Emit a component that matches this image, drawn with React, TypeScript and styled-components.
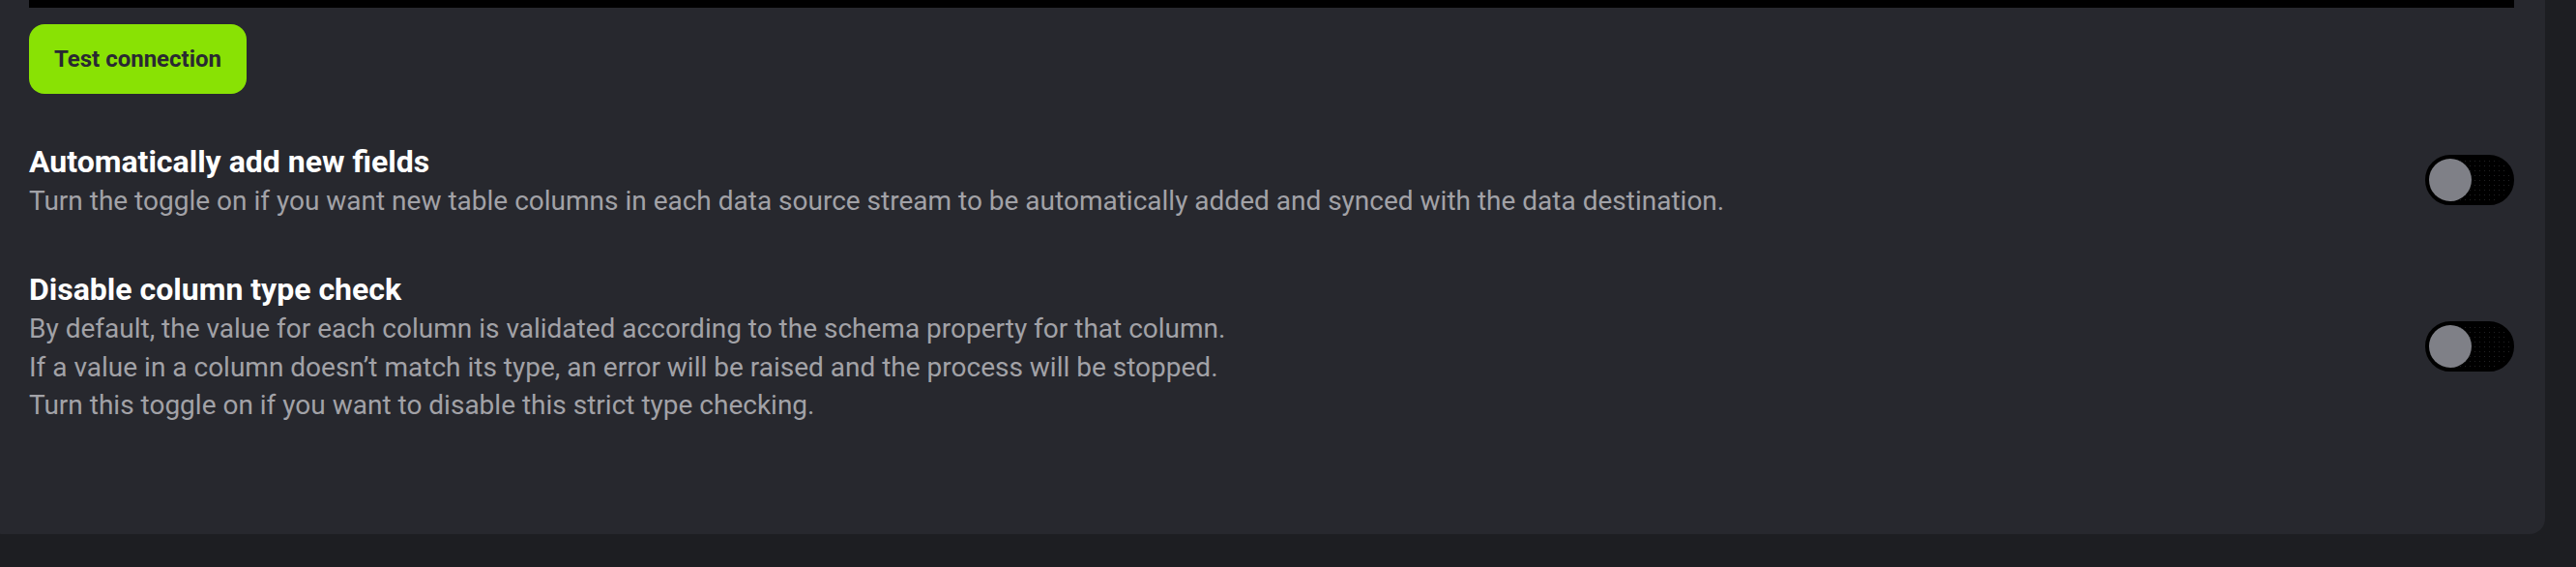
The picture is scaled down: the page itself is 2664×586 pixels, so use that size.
import React from "react";
import styled, { createGlobalStyle } from "styled-components";

const GlobalStyle = createGlobalStyle`
  html, body {
    margin: 0;
    padding: 0;
    background: #1d1e22;
    overflow: hidden;
  }
  body {
    font-family: Roboto, "Liberation Sans", Arial, sans-serif;
  }
`;

const Panel = styled.section`
  box-sizing: border-box;
  width: 2645px;
  margin-left: -13px;
  padding: 0 32px 113.5px 43px;
  background: #27282e;
  border-radius: 0 0 16px 16px;
  display: flex;
  flex-direction: column;
  align-items: flex-start;
`;

const EditorEdge = styled.div`
  align-self: stretch;
  height: 8px;
  background: #000000;
`;

const Button = styled.button`
  box-sizing: border-box;
  margin-top: 17px;
  width: 225px;
  height: 72px;
  border: none;
  border-radius: 16px;
  background: #89e204;
  color: #292932;
  font-family: Roboto, "Liberation Sans", Arial, sans-serif;
  font-weight: 700;
  font-size: 24px;
  padding: 0;
  cursor: pointer;
`;

const SettingsList = styled.div`
  align-self: stretch;
  margin-top: 48.5px;
  display: flex;
  flex-direction: column;
  gap: 51px;
`;

const SettingRow = styled.div`
  display: flex;
  align-items: center;
  justify-content: space-between;
  gap: 40px;
`;

const SettingText = styled.div`
  display: flex;
  flex-direction: column;
`;

const SettingTitle = styled.h3`
  margin: 0;
  font-size: 32px;
  line-height: 42px;
  font-weight: 700;
  color: #ffffff;
`;

const SettingDesc = styled.p`
  margin: 0;
  font-size: 28px;
  line-height: 39.5px;
  font-weight: 400;
  color: #a2a2a7;
`;

const Track = styled.span`
  position: relative;
  flex: none;
  box-sizing: border-box;
  width: 92px;
  height: 52px;
  border-radius: 26px;
  background-color: #000000;
  background-image: radial-gradient(circle, #222224 0.7px, transparent 1px);
  background-size: 5px 5px;
  border: 4px solid #000000;
`;

const Knob = styled.span<{ $on?: boolean }>`
  position: absolute;
  top: 0;
  left: ${(p) => (p.$on ? "40px" : "0")};
  width: 44px;
  height: 44px;
  border-radius: 50%;
  background: #7f8087;
`;

const Toggle = ({ on }: { on?: boolean }) => (
  <Track role="switch" aria-checked={!!on}>
    <Knob $on={on} />
  </Track>
);

export default function App() {
  return (
    <>
      <GlobalStyle />
      <Panel>
        <EditorEdge />
        <Button>Test connection</Button>
        <SettingsList>
          <SettingRow>
            <SettingText>
              <SettingTitle>Automatically add new fields</SettingTitle>
              <SettingDesc>
                Turn the toggle on if you want new table columns in each data source stream to be automatically added and synced with the data destination.
              </SettingDesc>
            </SettingText>
            <Toggle />
          </SettingRow>
          <SettingRow>
            <SettingText>
              <SettingTitle>Disable column type check</SettingTitle>
              <SettingDesc>
                By default, the value for each column is validated according to the schema property for that column.
                <br />
                If a value in a column doesn’t match its type, an error will be raised and the process will be stopped.
                <br />
                Turn this toggle on if you want to disable this strict type checking.
              </SettingDesc>
            </SettingText>
            <Toggle />
          </SettingRow>
        </SettingsList>
      </Panel>
    </>
  );
}
